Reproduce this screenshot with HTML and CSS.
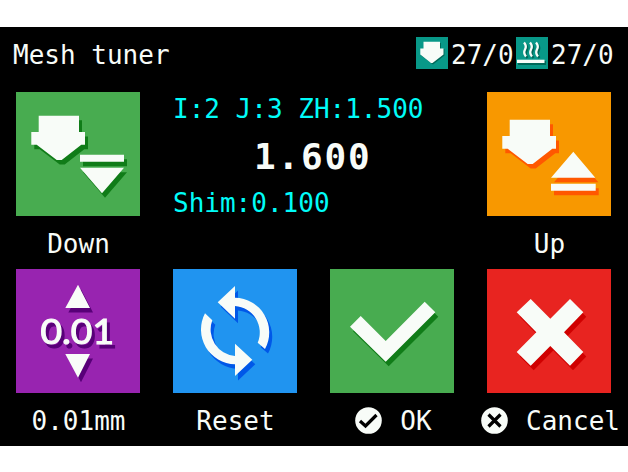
FILE: index.html
```html
<!DOCTYPE html>
<html lang="en">
<head>
<meta charset="utf-8">
<title>Mesh tuner</title>
<link rel="stylesheet" href="styles.css">
</head>
<body>
<main class="screen">
  <header class="bar">
    <h1 class="title">Mesh tuner</h1>
    <div class="temps">
      <svg class="temp-icon" viewBox="0 0 32 32"><path class="small-shade" d="M9 6H25V12H28.500V18.500L17 27.500L5 18.500V12H9Z"/><path class="ink" d="M7.500 4.700H24V11.500H27.500V17.500L16.500 26H15L4.300 17.500V11.500H7.500Z"/></svg>
      <span class="temp">27/0</span>
      <svg class="temp-icon" viewBox="0 0 32 32"><path class="small-shade" d="M2 24H30V28H2Z"/><path class="ink" d="M1 22.700H28.500V26H1Z"/><g class="heat heat-shade"><path d="M9.500 7q3 3.500 1 7t1 7M15.500 7q3 3.500 1 7t1 7M21.500 7q3 3.500 1 7t1 7"/></g><g class="heat"><path d="M8 5.500q3 3.500 1 7t1 7M14 5.500q3 3.500 1 7t1 7M20 5.500q3 3.500 1 7t1 7"/></g></svg>
      <span class="temp">27/0</span>
    </div>
  </header>
  <div class="grid">
    <button class="key">
      <svg class="tile green" viewBox="0 0 124 124">
        <defs>
          <path id="nozzle" d="M22.700 23.700H63V40H69V52.700H65.300L45.700 68H40.700L20.700 52.700H15.300V40H22.700Z"/>
          <path id="down" d="M64 62.700H108V69.700H64ZM64 75.700H108L86 101.300Z"/>
        </defs>
        <g class="shade"><use href="#nozzle"/><use href="#down"/></g>
        <g class="ink"><use href="#nozzle"/><use href="#down"/></g>
      </svg>
      <span class="label">Down</span>
    </button>
    <section class="info">
      <p class="point">I:2 J:3 ZH:1.500</p>
      <p class="value">1.600</p>
      <p class="shim">Shim:0.100</p>
    </section>
    <button class="key">
      <svg class="tile orange" viewBox="0 0 124 124">
        <defs><path id="up" d="M86.300 59.700L108.300 85.700H64ZM64 91.700H108.700V98.700H64Z"/></defs>
        <g class="shade"><use href="#nozzle" y="4"/><use href="#up"/></g>
        <g class="ink"><use href="#nozzle" y="4"/><use href="#up"/></g>
      </svg>
      <span class="label">Up</span>
    </button>
    <button class="key">
      <svg class="tile purple" viewBox="0 0 124 124">
        <defs><path id="step" d="M62 15.700L74 39H49.300ZM49.300 85H74L62 108.700Z"/></defs>
        <use class="shade" href="#step"/>
        <use class="ink" href="#step"/>
        <text class="step-text" x="24.500" y="75" textLength="73.500" lengthAdjust="spacingAndGlyphs">0.01</text>
      </svg>
      <span class="label">0.01mm</span>
    </button>
    <button class="key">
      <svg class="tile blue" viewBox="0 0 124 124">
        <defs><path id="cycle" d="M44.700 33.300L62 17V28.700A34.700 34.700 0 0 1 92 80L84.700 73.700A26.500 26.500 0 0 0 62 37V49.700ZM32 44.300L39.300 51.300A26.500 26.500 0 0 0 62 87V74.700L79.300 90.700L62 107V95.200A34.700 34.700 0 0 1 32 44.300Z"/></defs>
        <use class="shade" href="#cycle"/><use class="ink" href="#cycle"/>
      </svg>
      <span class="label">Reset</span>
    </button>
    <button class="key">
      <svg class="tile green" viewBox="0 0 124 124">
        <defs><path id="check" d="M20 57.700L30.700 47L55.700 72L94.700 32.700L105.300 43.300L55.700 92.700Z"/></defs>
        <use class="shade" href="#check"/><use class="ink" href="#check"/>
      </svg>
      <span class="label"><svg class="badge" viewBox="0 0 27 27"><circle class="ink" cx="13.500" cy="13.500" r="13.300"/><path class="mark" d="M5 14L10.500 19L21.500 8"/></svg>OK</span>
    </button>
    <button class="key">
      <svg class="tile red" viewBox="0 0 124 124">
        <defs><path id="cross" d="M43.700 30L63.300 49.700L83 30L96.300 43.300L77 63.300L96.300 83L83 96.700L63.300 77L43.700 96.700L29.700 83L49.300 63.300L29.700 43.300Z"/></defs>
        <use class="shade" href="#cross"/><use class="ink" href="#cross"/>
      </svg>
      <span class="label"><svg class="badge" viewBox="0 0 27 27"><circle class="ink" cx="13.500" cy="13.500" r="13.300"/><path class="mark" d="M7.500 7.500L19.500 19.500M19.500 7.500L7.500 19.500"/></svg>Cancel</span>
    </button>
  </div>
</main>
</body>
</html>
```
FILE: styles.css
```css
* { box-sizing: border-box; }
body { margin: 0; background: #fff; }
.screen {
  width: 628px;
  height: 419px;
  margin-top: 27px;
  background: #000;
  color: #f8fcf8;
  font: 26px/32px "DejaVu Sans Mono", monospace;
  overflow: hidden;
}
.bar {
  height: 65.4px;
  padding: 10px 15px 0 13px;
  display: flex;
  justify-content: space-between;
  align-items: flex-start;
}
.title { margin: 0; font: inherit; padding-top: 2px; }
.temps { display: flex; }
.temp { width: 65px; padding-top: 2px; margin-left: 3px; }
.temp:last-child { width: 62px; }
.temp-icon { width: 32px; height: 32px; background: #089888; display: block; }
.small-shade { fill: #006858; }
.heat { fill: none; stroke: #f8fcf8; stroke-width: 2.3; }
.heat-shade { stroke: #006858; }
.grid { display: grid; grid-template-columns: repeat(4, 157px); grid-template-rows: 177px 176px; }
.key {
  display: flex;
  flex-direction: column;
  gap: 12px;
  padding: 0;
  border: 0;
  background: none;
  color: inherit;
  font: inherit;
}
.tile { width: 124px; height: 124px; margin-left: 16px; display: block; }
.green { background: #48ac50; --shade: #107c18; }
.orange { background: #f89800; --shade: #ff5800; }
.purple { background: #9824b0; --shade: #580078; }
.blue { background: #2094f0; --shade: #0058e8; }
.red { background: #e82420; --shade: #d00000; }
.ink { fill: #f8fcf8; }
.shade { fill: var(--shade); transform: translate(3px, 4.5px); }
.step-text {
  font: 400 35px Lato, sans-serif;
  fill: #f8fcf8;
  stroke: #f8fcf8;
  stroke-width: 1.2px;
  filter: drop-shadow(3px 4px 0 var(--shade));
}
.label {
  width: 157px;
  display: flex;
  justify-content: center;
  align-items: center;
  white-space: nowrap;
}
.badge { width: 27px; height: 27px; margin: -2px 18px 0 2px; }
.mark { fill: none; stroke: #000; stroke-width: 3.2; }
.info { grid-column: span 2; padding: 1px 0 0 16px; }
.info p { margin: 0; }
.point, .shim { color: #00fcf8; }
.value { font-size: 36px; font-weight: 700; letter-spacing: 1.8px; line-height: 61px; padding: 1px 0 0 81px; }
```
